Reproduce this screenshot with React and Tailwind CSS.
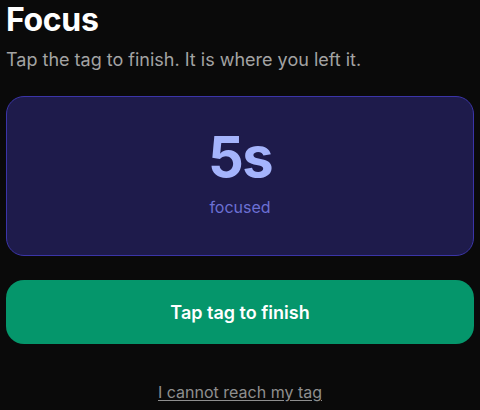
import React from 'react';

const App = () => {
  return (
    <div
      className="min-h-[410px] w-full bg-[#0a0a0a] px-[6px] text-white"
      style={{ fontFamily: 'Inter, "Noto Sans", sans-serif' }}
    >
      <h1 className="text-[32px] font-bold leading-[40px] tracking-[-0.01em] text-white">Focus</h1>
      <p className="mt-2 text-[18px] leading-6 text-[#a3a3a3]">
        Tap the tag to finish. It is where you left it.
      </p>

      {/* timer card */}
      <div className="mt-6 flex h-[160px] flex-col items-center justify-center rounded-[18px] border-[1.5px] border-[#3b35a8] bg-[#1e1b4b] pb-[8px]">
        <div className="text-[56px] font-bold leading-[60px] tracking-[-0.03em] text-[#a5b4fc]">5s</div>
        <div className="mt-[10px] text-[16px] leading-5 text-[#6c70d4]">focused</div>
      </div>

      <button className="mt-6 flex h-16 w-full items-center justify-center rounded-[18px] bg-[#05966b] text-[18px] font-semibold text-white">
        Tap tag to finish
      </button>

      <div className="mt-9 text-center">
        <a href="#" className="text-[16px] leading-6 text-[#8f8f8f] underline underline-offset-2">
          I cannot reach my tag
        </a>
      </div>
    </div>
  );
};

export default App;
